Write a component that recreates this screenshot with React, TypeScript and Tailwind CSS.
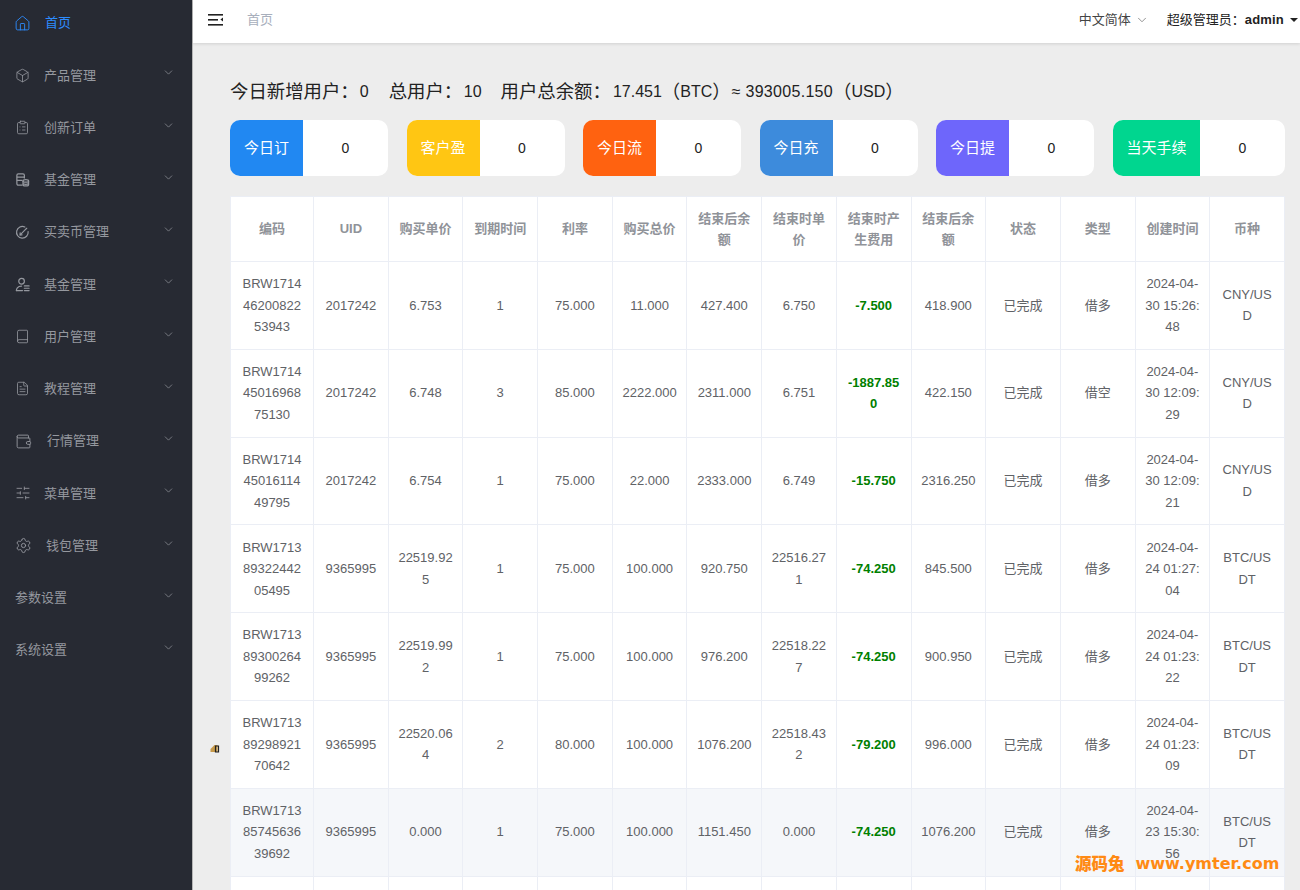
import React from "react";
import { House, Box, ClipboardList, Book, FileText, Wallet, SlidersHorizontal, Settings, ChevronDown } from "lucide-react";

const Fund = (p: any) => (
  <svg viewBox="0 0 16 16" fill="none" stroke="currentColor" strokeWidth="1.1" {...p}>
    <path d="M8 14H3.5A1.5 1.5 0 0 1 2 12.5v-9A1.5 1.5 0 0 1 3.5 2h5A1.5 1.5 0 0 1 10 3.5V7" />
    <path d="M2 5.5h8M2 9h6" />
    <ellipse cx="11.5" cy="9.5" rx="3" ry="1.4" />
    <path d="M8.5 9.5v4c0 .8 1.3 1.4 3 1.4s3-.6 3-1.4v-4M8.5 11.8c0 .8 1.3 1.3 3 1.3s3-.5 3-1.3" />
  </svg>
);
const Coin = (p: any) => (
  <svg viewBox="0 0 16 16" fill="none" stroke="currentColor" strokeWidth="1.2" strokeLinecap="round" {...p}>
    <path d="M10.5 2.2A6.2 6.2 0 1 0 14 7" />
    <path d="M5.5 10.5 L11 5 M11 5 l1.5-1.5" />
    <path d="M5.5 8.5 v2 h2" />
  </svg>
);
const UserList = (p: any) => (
  <svg viewBox="0 0 16 16" fill="none" stroke="currentColor" strokeWidth="1.1" strokeLinecap="round" {...p}>
    <circle cx="7" cy="4.5" r="3" />
    <path d="M1.5 14.5c0-1 .2-2 1-3 1-1.2 2.6-1.8 4.5-1.8" />
    <path d="M1.5 14.5H8M10 9.5h5M10 12h5M10 14.5h5" />
  </svg>
);
const MenuFold = () => (
  <svg viewBox="0 0 16 12" width="16" height="12" fill="#222">
    <rect x="0" y="0" width="15" height="1.6" />
    <rect x="0" y="5" width="10" height="1.6" />
    <rect x="0" y="10" width="15" height="1.6" />
    <path d="M15 3.6v4L12.4 5.6z" />
  </svg>
);

type Item = { label: string; icon?: any; size?: number; gap?: number };
const nav: Item[] = [
  { label: "产品管理", icon: Box, size: 15 },
  { label: "创新订单", icon: ClipboardList, size: 15 },
  { label: "基金管理", icon: Fund, size: 15 },
  { label: "买卖币管理", icon: Coin, size: 15 },
  { label: "基金管理", icon: UserList, size: 15 },
  { label: "用户管理", icon: Book, size: 15 },
  { label: "教程管理", icon: FileText, size: 15 },
  { label: "行情管理", icon: Wallet, size: 17, gap: 18 },
  { label: "菜单管理", icon: SlidersHorizontal, size: 16, gap: 15 },
  { label: "钱包管理", icon: Settings, size: 17, gap: 17 },
  { label: "参数设置" },
  { label: "系统设置" },
];

const stats = [
  { label: "今日订", color: "bg-[#2188f2]" },
  { label: "客户盈", color: "bg-[#ffc613]" },
  { label: "今日流", color: "bg-[#ff6210]" },
  { label: "今日充", color: "bg-[#3d8bdc]" },
  { label: "今日提", color: "bg-[#6e66fb]" },
];

const heads = ["编码", "UID", "购买单价", "到期时间", "利率", "购买总价", "结束后余额", "结束时单价", "结束时产生费用", "结束后余额", "状态", "类型", "创建时间", "币种"];

const rows = [
  ["BRW171446200822 53943", "2017242", "6.753", "1", "75.000", "11.000", "427.400", "6.750", "-7.500", "418.900", "已完成", "借多", "2024-04-30 15:26:48", "CNY/USD"],
  ["BRW171445016968 75130", "2017242", "6.748", "3", "85.000", "2222.000", "2311.000", "6.751", "-1887.850", "422.150", "已完成", "借空", "2024-04-30 12:09:29", "CNY/USD"],
  ["BRW171445016114 49795", "2017242", "6.754", "1", "75.000", "22.000", "2333.000", "6.749", "-15.750", "2316.250", "已完成", "借多", "2024-04-30 12:09:21", "CNY/USD"],
  ["BRW171389322442 05495", "9365995", "22519.925", "1", "75.000", "100.000", "920.750", "22516.271", "-74.250", "845.500", "已完成", "借多", "2024-04-24 01:27:04", "BTC/USDT"],
  ["BRW171389300264 99262", "9365995", "22519.992", "1", "75.000", "100.000", "976.200", "22518.227", "-74.250", "900.950", "已完成", "借多", "2024-04-24 01:23:22", "BTC/USDT"],
  ["BRW171389298921 70642", "9365995", "22520.064", "2", "80.000", "100.000", "1076.200", "22518.432", "-79.200", "996.000", "已完成", "借多", "2024-04-24 01:23:09", "BTC/USDT"],
  ["BRW171385745636 39692", "9365995", "0.000", "1", "75.000", "100.000", "1151.450", "0.000", "-74.250", "1076.200", "已完成", "借多", "2024-04-23 15:30:56", "BTC/USDT"],
];

export default function App() {
  return (
    <div className="relative flex h-[890px] w-[1300px] overflow-hidden bg-[#ededed] [font-family:'Liberation_Sans','Noto_Sans_CJK_SC',sans-serif]">
      <aside className="w-[192px] shrink-0 bg-[#272a33] text-[13px] text-[#95989f]">
        <div className="-mt-[3px] flex h-[52.25px] items-center gap-[14px] pl-[14px] text-[#2d8cff]">
          <House size={17} strokeWidth={1.3} />
          <span>首页</span>
        </div>
        {nav.map((n, i) => {
          const Icon = n.icon;
          return (
            <div key={i} className="relative flex h-[52.25px] items-center pl-[15px] pr-[18px]">
              {Icon && (
                <span className="flex w-[14px] shrink-0 justify-start" style={{ marginRight: n.gap ?? 15 }}>
                  <Icon width={n.size} height={n.size} size={n.size} strokeWidth={1.3} className="shrink-0" />
                </span>
              )}
              <span>{n.label}</span>
              <ChevronDown size={13} strokeWidth={1.3} className="absolute right-[17px] top-[17px]" />
            </div>
          );
        })}
      </aside>

      <main className="flex min-w-0 flex-1 flex-col border-l border-[#b5b5b5]">
        <header className="flex h-[43px] shrink-0 items-center bg-white pb-[4px] pl-[15px] pr-[2px] shadow-[0_1px_3px_rgba(0,0,0,0.12)]">
          <MenuFold />
          <span className="ml-[23px] text-[13px] text-[#a8afbc]">首页</span>
          <span className="ml-auto flex items-center gap-[4px] text-[13px] text-[#444]">
            中文简体 <ChevronDown size={14} strokeWidth={1.2} className="text-[#666]" />
          </span>
          <span className="ml-[18px] text-[13px] text-[#222]">
            超级管理员：<b className="font-bold tracking-[0.2px]">admin</b>
          </span>
          <span className="ml-[6px] h-0 w-0 border-x-[4px] border-t-[4px] border-x-transparent border-t-[#222]" />
        </header>

        <div className="pl-[37px] pr-[15px]">
          <div className="mt-[37px] flex h-[24px] items-center whitespace-nowrap text-[16px] text-[#222]">
            <span className="text-[18.4px]">今日新增用户：</span>
            <span className="ml-[1px]">0</span>
            <span className="ml-[20px] text-[18.4px]">总用户：</span>
            <span className="ml-[1.5px]">10</span>
            <span className="ml-[19px] text-[18.4px]">用户总余额：</span>
            <span className="ml-[2px]">17.451</span>
            <span className="text-[18.4px]">（</span>
            <span>BTC</span>
            <span className="text-[18.4px]">）</span>
            <span className="ml-[1px] tracking-[0.3px]">≈ 393005.150</span>
            <span className="text-[18.4px]">（</span>
            <span>USD</span>
            <span className="text-[18.4px]">）</span>
          </div>

          <div className="mt-[16px] flex gap-[18.5px]">
            {stats.map((s, i) => (
              <div key={i} className="flex h-[56px] w-[158px] overflow-hidden rounded-[10px] bg-white">
                <div className={`flex w-[73px] items-center justify-center text-[15px] text-white ${s.color}`}>{s.label}</div>
                <div className="flex flex-1 items-center justify-center text-[14px] text-[#222]">0</div>
              </div>
            ))}
            <div className="ml-[0.5px] flex h-[56px] w-[172px] overflow-hidden rounded-[10px] bg-white">
              <div className="flex w-[87px] items-center justify-center bg-[#00d68f] text-[15px] text-white">当天手续</div>
              <div className="flex flex-1 items-center justify-center text-[14px] text-[#222]">0</div>
            </div>
          </div>

          <table className="mt-[20px] w-[1055px] table-fixed border-collapse bg-white text-center text-[13px] leading-[21.5px] text-[#606266]">
            <colgroup>
              <col className="w-[83px]" />
              {heads.slice(1).map((_, i) => (
                <col key={i} />
              ))}
            </colgroup>
            <thead>
              <tr className="h-[65px]">
                {heads.map((h, i) => (
                  <th key={i} className="border border-[#ebeef5] px-[9.5px] font-bold text-[#909399] break-all">
                    {h}
                  </th>
                ))}
              </tr>
            </thead>
            <tbody>
              {rows.map((r, ri) => (
                <tr key={ri} className={`h-[87.8px] ${ri === 6 ? "bg-[#f5f7fa]" : ""}`}>
                  {r.map((c, ci) => (
                    <td key={ci} className={`border border-[#ebeef5] px-[9.5px] break-all ${ci === 8 ? "font-bold text-[#008000]" : ""}`}>
                      {c}
                    </td>
                  ))}
                </tr>
              ))}
              <tr className="h-[87.8px]">
                {heads.map((_, i) => (
                  <td key={i} className="border border-[#ebeef5]" />
                ))}
              </tr>
            </tbody>
          </table>
        </div>
      </main>

      <svg viewBox="0 0 10 10" width="11" height="10" className="absolute left-[209px] top-[743px]">
        <path d="M1 6 L5 2 L8 2 L8 9 L1 9 Z" fill="#c79a4a" />
        <path d="M6 3 h3 v6 h-3 z" fill="none" stroke="#222" strokeWidth="1.2" />
      </svg>
      <div className="absolute left-[1075px] top-[852px] flex items-center gap-[11px] whitespace-nowrap font-bold text-[#ff8a14]">
        <span className="text-[16.5px] font-black">源码兔</span>
        <span className="text-[16px] [font-family:'DejaVu_Sans',sans-serif]">www.ymter.com</span>
      </div>
    </div>
  );
}
